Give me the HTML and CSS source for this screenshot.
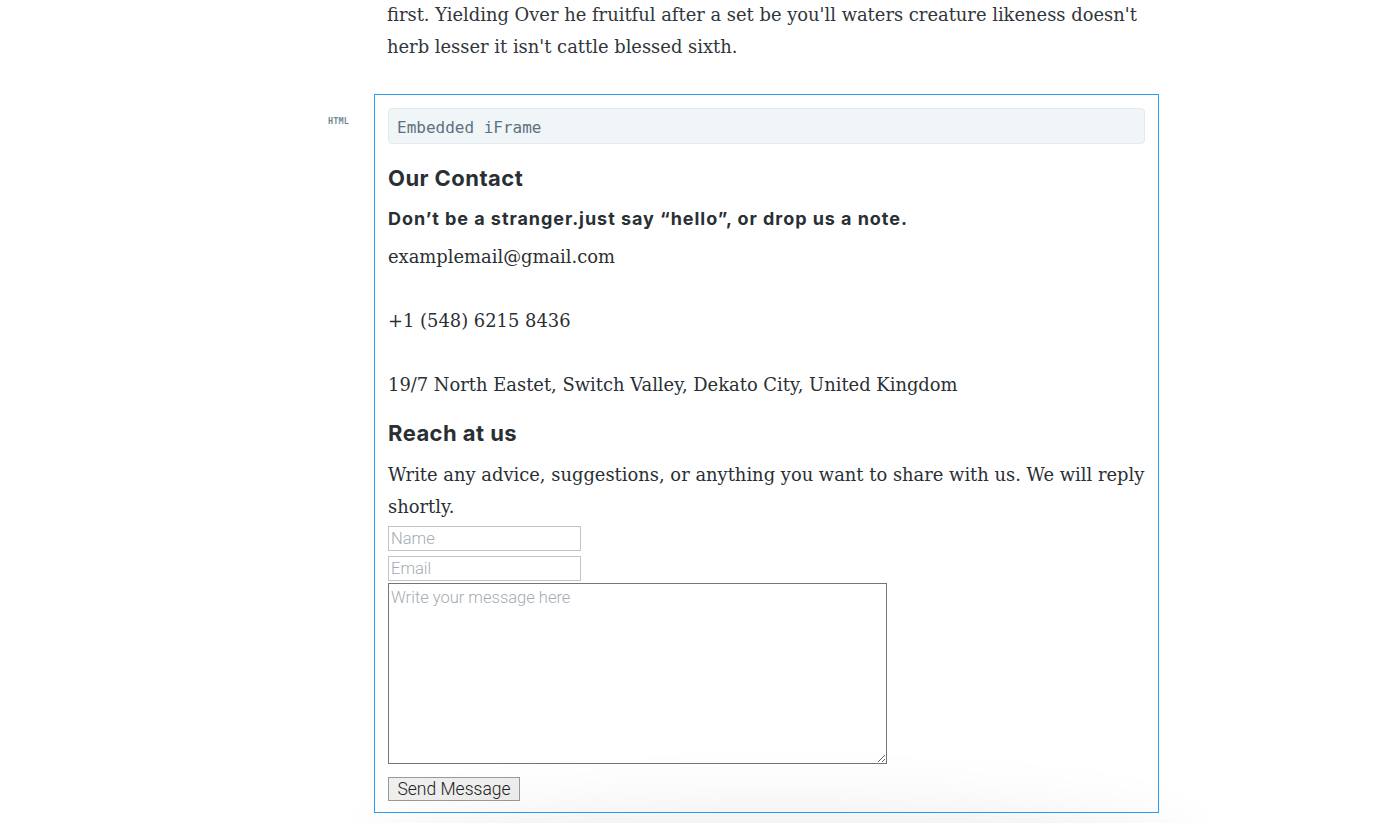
FILE: index.html
```html
<!DOCTYPE html>
<html lang="en">
<head>
<meta charset="utf-8">
<title>Contact</title>
<link rel="stylesheet" href="styles.css">
</head>
<body>
<main class="article">
  <p class="lead">first. Yielding Over he fruitful after a set be you'll waters creature likeness doesn't herb lesser it isn't cattle blessed sixth.</p>
  <section class="card">
    <span class="card-label">HTML</span>
    <div class="embed-title">Embedded iFrame</div>
    <h2 class="heading">Our Contact</h2>
    <h3 class="subheading">Don’t be a stranger.just say “hello”, or drop us a note.</h3>
    <p class="serif">examplemail@gmail.com<br><br>+1 (548) 6215 8436<br><br>19/7 North Eastet, Switch Valley, Dekato City, United Kingdom</p>
    <h2 class="heading heading-reach">Reach at us</h2>
    <p class="serif serif-reach">Write any advice, suggestions, or anything you want to share with us. We will reply shortly.</p>
    <form class="form">
      <input class="field field-name" type="text" placeholder="Name">
      <input class="field field-email" type="email" placeholder="Email">
      <textarea class="message" placeholder="Write your message here"></textarea>
      <button class="send" type="button">Send Message</button>
    </form>
  </section>
</main>
<div class="bottom-shadow"></div>
</body>
</html>
```
FILE: styles.css
```css
html, body {
  margin: 0;
  padding: 0;
  background: #ffffff;
}

body {
  height: 823px;
  overflow: hidden;
}

.article {
  width: 785px;
  margin-left: 374px;
}

.lead {
  margin: -1px 0 0 0;
  padding: 0 13px;
  font-family: "DejaVu Serif", Georgia, serif;
  font-size: 17.9px;
  line-height: 32px;
  color: #30363b;
}

.card {
  position: relative;
  margin-top: 31px;
  border: 1px solid #2a9df4;
  padding: 13px 13px 11px 13px;
  box-sizing: border-box;
  height: 719px;
}

.card-label {
  position: absolute;
  left: -47px;
  top: 21px;
  font-family: "DejaVu Sans Mono", monospace;
  font-size: 8.5px;
  font-weight: bold;
  color: #738a94;
  letter-spacing: 0.1px;
}

.embed-title {
  height: 34px;
  border: 1px solid #e3ebf0;
  border-radius: 4px;
  background: #f0f5f8;
  padding-left: 8px;
  font-family: "DejaVu Sans Mono", monospace;
  font-size: 16px;
  line-height: 37px;
  color: #5d7180;
}

.heading {
  margin: 20px 0 0 0;
  font-family: Inter, "Noto Sans", sans-serif;
  font-size: 22px;
  font-weight: 700;
  letter-spacing: 0.45px;
  line-height: 28px;
  color: #2a2f34;
}

.subheading {
  margin: 14px 0 0 0;
  font-family: Inter, "Noto Sans", sans-serif;
  font-size: 18px;
  font-weight: 700;
  letter-spacing: 0.95px;
  line-height: 26px;
  color: #2a2f34;
}

.serif {
  margin: 9px 0 0 0;
  font-family: "DejaVu Serif", Georgia, serif;
  font-size: 17.9px;
  line-height: 32px;
  color: #2a2f34;
}

.heading-reach {
  margin-top: 18px;
}

.serif-reach {
  margin-top: 12px;
}

.form {
  display: flex;
  flex-direction: column;
  align-items: flex-start;
}

.field {
  box-sizing: border-box;
  width: 193px;
  height: 25px;
  margin: 0;
  padding: 0 2px;
  border: 1px solid #c4c4c4;
  font-family: Roboto, "Liberation Sans", sans-serif;
  font-size: 16.5px;
  font-weight: 300;
  color: #333;
}

.field-name {
  margin-top: 3px;
}

.field-email {
  margin-top: 5px;
}

.field::placeholder,
.message::placeholder {
  color: #a3acb3;
}

.message {
  box-sizing: border-box;
  width: 499px;
  height: 181px;
  margin: 2px 0 0 0;
  padding: 4px 2px;
  border: 1px solid #767676;
  font-family: Roboto, "Liberation Sans", sans-serif;
  font-size: 16.5px;
  font-weight: 300;
  color: #333;
  resize: both;
}

.send {
  margin-top: 13px;
  box-sizing: border-box;
  width: 132px;
  height: 24px;
  padding: 0;
  border: 1px solid #9a9a9a;
  border-radius: 0;
  background: #efefef;
  font-family: Roboto, "Liberation Sans", sans-serif;
  font-size: 17.5px;
  font-weight: 300;
  color: #222;
  line-height: 22px;
}

.bottom-shadow {
  position: fixed;
  left: 400px;
  top: 838px;
  width: 760px;
  height: 40px;
  border-radius: 50%;
  box-shadow: 0 0 70px 30px rgba(0, 0, 0, 0.07);
  pointer-events: none;
}
```
